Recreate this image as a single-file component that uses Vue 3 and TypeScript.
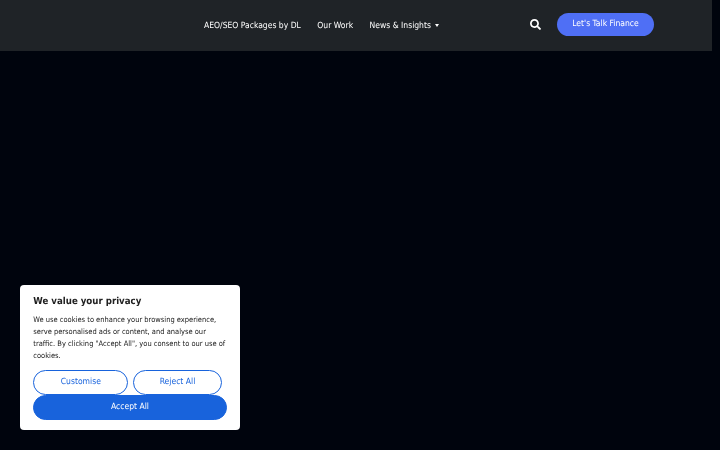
<script setup lang="ts">
const links: string[] = ['AEO/SEO Packages by DL', 'Our Work']
</script>

<template>
  <div class="page">
    <header class="header">
      <nav class="nav soft">
        <a v-for="l in links" :key="l" class="link">{{ l }}</a>
        <a class="link">News &amp; Insights <span class="caret"></span></a>
      </nav>
      <svg class="search" viewBox="0 0 512 512" width="11" height="11">
        <path fill="#fff" d="M505 442.700L405.300 343c-4.500-4.500-10.600-7-17-7H372c27.600-35.300 44-79.700 44-128C416 93.100 322.900 0 208 0S0 93.100 0 208s93.100 208 208 208c48.300 0 92.700-16.400 128-44v16.300c0 6.400 2.500 12.500 7 17l99.700 99.700c9.400 9.400 24.600 9.400 33.900 0l28.300-28.300c9.400-9.400 9.400-24.600.1-34zM208 336c-70.700 0-128-57.200-128-128 0-70.700 57.200-128 128-128 70.700 0 128 57.200 128 128 0 70.700-57.200 128-128 128z"/>
      </svg>
      <a class="cta"><span class="soft">Let's Talk Finance</span></a>
    </header>
    <section class="cookie">
      <h2 class="title soft">We value your privacy</h2>
      <p class="text soft">We use cookies to enhance your browsing experience,<br>serve personalised ads or content, and analyse our<br>traffic. By clicking "Accept All", you consent to our use of<br>cookies.</p>
      <div class="actions">
        <button class="btn outline first"><span class="soft">Customise</span></button>
        <button class="btn outline second"><span class="soft">Reject All</span></button>
        <button class="btn solid"><span class="soft">Accept All</span></button>
      </div>
    </section>
  </div>
</template>

<style>
html, body { margin: 0; background: #00040c; }
</style>

<style scoped>
.page {
  position: relative;
  width: 720px;
  height: 450px;
  overflow: hidden;
  background: #00040d;
  font-family: "DejaVu Sans", sans-serif;
  font-stretch: condensed;
  text-rendering: geometricPrecision;
}
.soft { display: inline-block; filter: blur(0.3px); }
.nav.soft { display: flex; }
.header {
  width: 712px;
  height: 51px;
  box-sizing: border-box;
  padding: 0 58px 2px 204px;
  background: #1f2327;
  display: flex;
  align-items: center;
}
.nav { gap: 16.5px; flex: 1; padding-top: 2px; }
.link { color: #fff; font-size: 8.5px; line-height: 14px; white-space: nowrap; }
.caret {
  display: inline-block;
  width: 0;
  height: 0;
  margin-left: 2px;
  vertical-align: 1px;
  border-left: 2.5px solid transparent;
  border-right: 2.5px solid transparent;
  border-top: 3px solid #fff;
}
.search { margin-right: 16.5px; }
.cta {
  width: 97px;
  height: 23px;
  border-radius: 12px;
  background: #4f6ff5;
  color: #fff;
  font-size: 8.5px;
  line-height: 23px;
  text-align: center;
  white-space: nowrap;
}
.cookie {
  position: absolute;
  left: 20px;
  top: 285px;
  width: 220px;
  height: 145px;
  box-sizing: border-box;
  padding: 11px 13.3px 0;
  background: #fff;
  border-radius: 4px;
  color: #212121;
}
.title { display: block; margin: 0 0 6px; font-size: 9.6px; line-height: 12px; font-weight: 700; }
.text { display: block; margin: 0 0 8px; font-size: 7.47px; line-height: 12px; white-space: nowrap; }
.actions { display: flex; flex-wrap: wrap; column-gap: 4.4px; }
.btn {
  box-sizing: border-box;
  height: 25px;
  padding: 0;
  border-radius: 13px;
  font-family: inherit;
  font-stretch: condensed;
  font-size: 8.5px;
  text-rendering: geometricPrecision;
}
.outline { height: 24.5px; background: #fff; border: 1px solid #1863dc; color: #1863dc; }
.first { width: 95px; }
.second { width: 89.6px; }
.solid { width: 193.4px; background: #1863dc; border: 1px solid #1863dc; color: #fff; }
</style>
